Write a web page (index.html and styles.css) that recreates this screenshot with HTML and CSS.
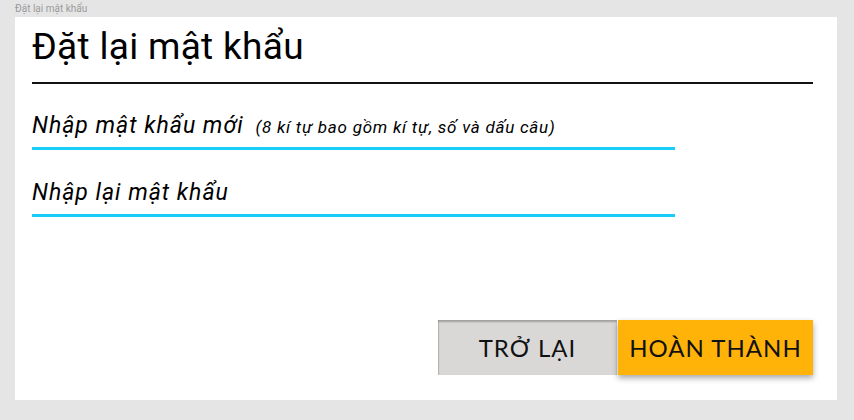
FILE: index.html
```html
<!DOCTYPE html>
<html lang="vi">
<head>
<meta charset="utf-8">
<title>Đặt lại mật khẩu</title>
<link rel="stylesheet" href="styles.css">
</head>
<body>
<div class="frame-label">Đặt lại mật khẩu</div>
<main class="card">
  <h1 class="title">Đặt lại mật khẩu</h1>
  <div class="field first">
    <span class="label">Nhập mật khẩu mới</span><span class="hint">(8 kí tự bao gồm kí tự, số và dấu câu)</span>
  </div>
  <div class="field second">
    <span class="label">Nhập lại mật khẩu</span>
  </div>
  <div class="actions">
    <button class="btn back">TRỞ LẠI</button>
    <button class="btn done">HOÀN THÀNH</button>
  </div>
</main>
</body>
</html>
```

FILE: styles.css
```css
html, body {
  margin: 0;
  padding: 0;
}
body {
  background: #e5e5e5;
  width: 854px;
  height: 420px;
  overflow: hidden;
  font-family: Roboto, "Liberation Sans", sans-serif;
}
.frame-label {
  height: 17px;
  padding-left: 15px;
  font-size: 10px;
  line-height: 17px;
  color: #9a9a9a;
}
.card {
  margin-left: 15px;
  width: 822px;
  height: 383px;
  background: #fff;
  box-sizing: border-box;
  padding: 8px 24px 25px 17px;
  display: flex;
  flex-direction: column;
}
.title {
  margin: 0;
  font-size: 37px;
  line-height: 44px;
  font-weight: 400;
  letter-spacing: 0.3px;
  color: #000;
  padding-bottom: 13px;
  border-bottom: 2px solid #111;
}
.field {
  width: 643px;
  height: 26px;
  padding-bottom: 8px;
  border-bottom: 3px solid #18cdf8;
  margin-top: 29px;
  font-style: italic;
  line-height: 26px;
  white-space: nowrap;
}
.field.second {
  margin-top: 30px;
}
.label {
  font-size: 23px;
  letter-spacing: 1px;
  color: #000;
}
.hint {
  font-size: 17px;
  letter-spacing: 0.75px;
  margin-left: 12px;
  color: #000;
}
.actions {
  margin-top: auto;
  display: flex;
  justify-content: flex-end;
  gap: 1px;
}
.btn {
  border: 0;
  margin: 0;
  padding: 0;
  height: 55px;
  font-family: Lato, "Open Sans", sans-serif;
  font-size: 24px;
  font-weight: 400;
  color: #111;
  letter-spacing: 1px;
}
.back {
  width: 179px;
  background: #d9d8d7;
  box-shadow: inset 0 2px 2px rgba(0,0,0,0.25), inset 1px 0 1px rgba(0,0,0,0.12);
}
.done {
  width: 195px;
  background: #ffb308;
  box-shadow: 0 3px 6px rgba(0,0,0,0.35);
}
```
